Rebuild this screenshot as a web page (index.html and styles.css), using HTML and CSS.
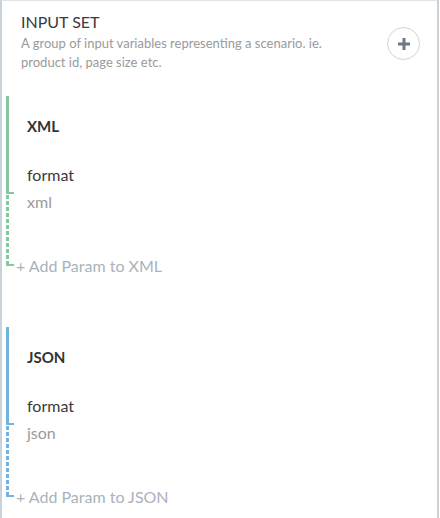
FILE: index.html
```html
<!DOCTYPE html>
<html>
<head>
<meta charset="utf-8">
<link rel="stylesheet" href="styles.css">
</head>
<body>
<div class="panel">
  <div class="header">
    <div class="header-text">
      <div class="title">INPUT SET</div>
      <div class="desc">A group of input variables representing a scenario. ie. product id, page size etc.</div>
    </div>
    <button class="add-btn" aria-label="Add input set">
      <svg width="12" height="12" viewBox="0 0 12 12"><rect x="4.5" y="0" width="3" height="12" fill="#707880"/><rect x="0" y="4.5" width="12" height="3" fill="#707880"/></svg>
    </button>
  </div>

  <div class="group green">
    <div class="group-head">
      <div class="group-name">XML</div>
      <div class="param-name">format</div>
    </div>
    <div class="group-tail">
      <div class="param-value">xml</div>
      <div class="add-param">+ Add Param to XML</div>
    </div>
  </div>

  <div class="group blue">
    <div class="group-head">
      <div class="group-name">JSON</div>
      <div class="param-name">format</div>
    </div>
    <div class="group-tail">
      <div class="param-value">json</div>
      <div class="add-param">+ Add Param to JSON</div>
    </div>
  </div>
</div>
</body>
</html>
```

FILE: styles.css
```css
html, body {
  margin: 0;
  padding: 0;
  background: #ffffff;
}
body {
  font-family: Lato, "Open Sans", sans-serif;
  color: #333333;
}
.panel {
  box-sizing: border-box;
  width: 439px;
  height: 518px;
  border-left: 2px solid #c9d1d9;
  border-right: 2px solid #c9d1d9;
  border-top: 1px solid #dfe3e8;
  background: #ffffff;
  overflow: hidden;
}
.header {
  display: flex;
  align-items: flex-start;
  padding: 11px 17px 0 19px;
}
.header-text {
  flex: 1;
}
.title {
  font-size: 16px;
  line-height: 20px;
  color: #3a3a3a;
}
.desc {
  font-size: 13px;
  line-height: 19px;
  color: #9a9a9a;
  margin-top: 2px;
  max-width: 320px;
}
.add-btn {
  width: 33px;
  height: 33px;
  border-radius: 50%;
  border: 1px solid #cfd3d7;
  background: #ffffff;
  display: flex;
  align-items: center;
  justify-content: center;
  padding: 0;
  margin-top: 15px;
}
.add-btn svg { display: block; }

.group {
  margin-left: 4px;
  margin-top: 24px;
}
.group + .group {
  margin-top: 51px;
}
.group.green { --c: #84c69d; }
.group.blue { --c: #72b3df; }

.group-head {
  position: relative;
  border-left: 3px solid var(--c);
  padding: 20px 0 9px 18px;
}
.group-head::after {
  content: "";
  position: absolute;
  left: -3px;
  bottom: 0;
  width: 8px;
  height: 2px;
  background: var(--c);
}
.group-name {
  font-size: 15px;
  font-weight: 700;
  line-height: 20px;
  color: #333333;
}
.param-name {
  font-size: 16px;
  line-height: 20px;
  margin-top: 29px;
  color: #3a3a3a;
}
.group-tail {
  position: relative;
  padding-left: 21px;
}
.group-tail::before {
  content: "";
  position: absolute;
  left: 0;
  top: 1px;
  bottom: 10px;
  width: 3px;
  background: repeating-linear-gradient(to bottom, var(--c) 0 4px, transparent 4px 6px);
}
.group-tail::after {
  content: "";
  position: absolute;
  left: 0;
  bottom: 10px;
  width: 8px;
  height: 2px;
  background: var(--c);
}
.param-value {
  font-size: 16px;
  line-height: 16px;
  color: #9a9a9a;
}
.add-param {
  font-size: 16px;
  line-height: 20px;
  color: #aab2bb;
  margin-top: 46px;
  margin-left: -11px;
}
```
